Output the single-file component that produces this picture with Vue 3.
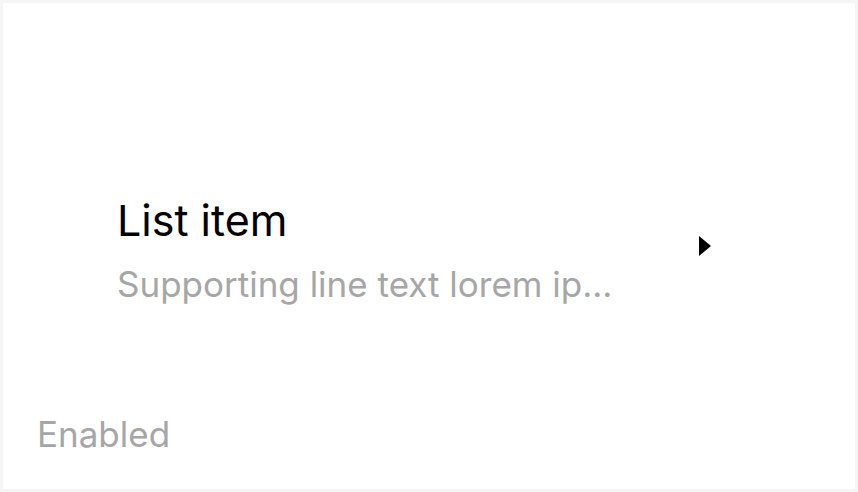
<script setup>
const item = { title: 'List item', support: 'Supporting line text lorem ip...' }
</script>

<template>
  <main class="panel">
    <a class="item" href="#">
      <span class="copy">
        <span class="title">{{ item.title }}</span>
        <span class="support">{{ item.support }}</span>
      </span>
      <svg class="arrow" viewBox="0 0 12 20" aria-hidden="true"><path d="M0 0L12 10L0 20Z" /></svg>
    </a>
    <p class="state">Enabled</p>
  </main>
</template>

<style>
body { margin: 0; background: #fff; }
</style>

<style scoped>
.panel {
  box-sizing: border-box;
  display: flex;
  flex-direction: column;
  min-height: 100vh;
  padding: 0 34px 31px;
  border: 3px solid #f5f5f5;
  background: #fff;
  font-family: Inter, "Liberation Sans", Arial, sans-serif;
}
.item {
  display: flex;
  flex: 1;
  align-items: center;
  justify-content: space-between;
  padding: 78px 110px 0 80px;
  color: #000;
  text-decoration: none;
}
.copy { display: flex; flex-direction: column; gap: 16px; }
.title { font-size: 43px; line-height: 60px; }
.support { color: #a6a6a6; font-size: 35px; line-height: 36px; white-space: nowrap; }
.arrow { flex: none; width: 12px; height: 20px; }
.state { margin: 0; color: #a6a6a6; font-size: 35px; line-height: 48px; }
</style>
